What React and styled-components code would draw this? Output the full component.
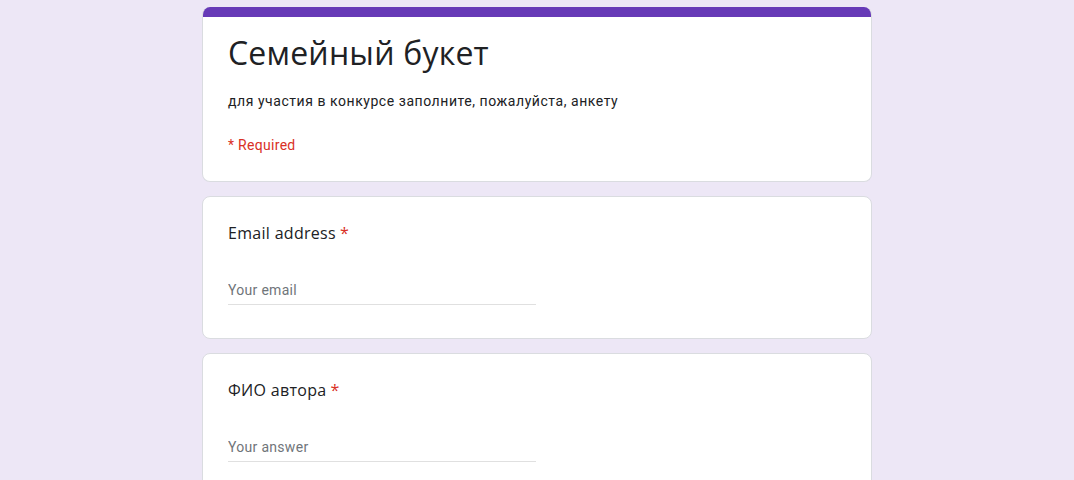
import styled, {createGlobalStyle} from 'styled-components';

const Global = createGlobalStyle`
  html, body { margin:0; padding:0; background:#ede7f6; }
  body { font-family: Roboto, "Noto Sans", Arial, sans-serif; color:#202124; }
`;

/* ---------- styled ---------- */
const Page = styled.main`
  width:670px;margin:0 auto;padding-top:7px;
  display:flex;flex-direction:column;gap:14px;
`;
const Card = styled.section`
  background:#fff;border:1px solid #dadce0;border-radius:8px;
  overflow:hidden;
  ${p => p.$head && `border-top:none;`}
`;
const Bar = styled.div`height:10px;background:#673ab7;`;
const HeadBody = styled.div`
  padding:14px 25px 26px;
  display:flex;flex-direction:column;
`;
const Title = styled.h1`
  margin:0;font-weight:400;font-size:32px;line-height:44px;
  font-family: "Open Sans", Roboto, sans-serif;letter-spacing:0.2px;
`;
const Desc = styled.p`
  margin:16px 0 0;font-size:14px;line-height:20px;letter-spacing:.55px;
`;
const Req = styled.p`
  margin:24px 0 0;font-size:14px;line-height:20px;color:#d93025;letter-spacing:.3px;
`;
const QBody = styled.div`padding:24px 25px 33px;`;
const Label = styled.div`
  font-family:"Open Sans", Roboto, sans-serif;font-size:16px;line-height:24px;
  letter-spacing:.3px;
  span{color:#d93025;margin-left:4px;}
`;
const Input = styled.input`
  display:block;margin-top:34px;width:308px;box-sizing:border-box;
  border:none;border-bottom:1px solid #e0e0e0;outline:none;
  font:14px/22px Roboto, sans-serif;letter-spacing:.3px;padding:0 0 3px;color:#202124;
  &::placeholder{color:#70757a;}
`;

const questions = [
  {id:1, label:'Email address', ph:'Your email'},
  {id:2, label:'ФИО автора', ph:'Your answer'},
];

export default function App() {
  return (
    <>
      <Global/>
      <Page>
        <Card $head>
          <Bar/>
          <HeadBody>
            <Title>Семейный букет</Title>
            <Desc>для участия в конкурсе заполните, пожалуйста, анкету</Desc>
            <Req>* Required</Req>
          </HeadBody>
        </Card>
        {questions.map(q => (
          <Card key={q.id}>
            <QBody>
              <Label>{q.label}<span>*</span></Label>
              <Input placeholder={q.ph}/>
            </QBody>
          </Card>
        ))}
      </Page>
    </>
  );
}
